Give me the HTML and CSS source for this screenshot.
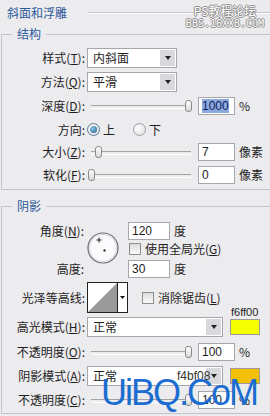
FILE: index.html
```html
<!DOCTYPE html>
<html>
<head>
    <meta charset="utf-8">
    <title>斜面和浮雕</title>
    <link rel="stylesheet" href="styles.css">
</head>
<body>
<div class="panel">
    <div class="head">
        <span class="head-title">斜面和浮雕</span>
        <span class="head-line"></span>
    </div>

    <!-- 结构 -->
    <fieldset class="group group-top">
        <legend>结构</legend>
        <div class="row">
            <span class="lbl">样式(<u>T</u>):</span>
            <div class="select"><span class="select-text">内斜面</span><span class="select-btn"></span></div>
        </div>
        <div class="row">
            <span class="lbl">方法(<u>Q</u>):</span>
            <div class="select"><span class="select-text">平滑</span><span class="select-btn"></span></div>
        </div>
        <div class="row">
            <span class="lbl">深度(<u>D</u>):</span>
            <div class="slider"><span class="thumb" style="left: 97px"></span></div>
            <div class="field"><span class="sel">1000</span></div>
            <span class="unit">%</span>
        </div>
        <div class="row r23">
            <span class="lbl">方向:</span>
            <span class="radio on"></span><span class="radio-text">上</span>
            <span class="radio gap"></span><span class="radio-text">下</span>
        </div>
        <div class="row r22">
            <span class="lbl">大小(<u>Z</u>):</span>
            <div class="slider"><span class="thumb" style="left: 7px"></span></div>
            <div class="field">7</div>
            <span class="unit">像素</span>
        </div>
        <div class="row r23">
            <span class="lbl">软化(<u>F</u>):</span>
            <div class="slider"><span class="thumb" style="left: 0px"></span></div>
            <div class="field">0</div>
            <span class="unit">像素</span>
        </div>
    </fieldset>

    <!-- 阴影 -->
    <fieldset class="group group-shade">
        <legend>阴影</legend>
        <div class="angle">
            <span class="lbl a1">角度(<u>N</u>):</span>
            <svg class="dial" width="32" height="32" viewBox="0 0 32 32">
                <circle cx="16" cy="16" r="15" fill="#fbfbfd" stroke="#6a6a70" stroke-width="1.2"/>
                <circle cx="16" cy="16" r="13.6" fill="none" stroke="#d6d6dc" stroke-width="1"/>
                <path d="M12 5.5v5M9.5 8h5" stroke="#222" stroke-width="1"/>
                <rect x="16.5" y="17.5" width="2" height="2" fill="#111"/>
            </svg>
            <div class="cell c1"><div class="field mid">120</div><span class="unit">度</span></div>
            <div class="cell c2"><span class="check"></span><span class="check-text">使用全局光(<u>G</u>)</span></div>
            <span class="lbl a3">高度:</span>
            <div class="cell c3"><div class="field mid">30</div><span class="unit">度</span></div>
        </div>
        <div class="row r33">
            <span class="lbl">光泽等高线:</span>
            <svg class="contour" width="41" height="31" viewBox="0 0 41 31">
                <rect x="0.5" y="0.5" width="40" height="30" fill="#fff" stroke="#222"/>
                <polygon points="1,30 30,1 30,30" fill="#9a9a9a"/>
                <line x1="30.5" y1="0" x2="30.5" y2="31" stroke="#222"/>
                <polygon points="33,14 38,14 35.5,17" fill="#111"/>
            </svg>
            <span class="check far"></span><span class="check-text">消除锯齿(<u>L</u>)</span>
        </div>
        <div class="row r26">
            <span class="lbl">高光模式(<u>H</u>):</span>
            <div class="select wide"><span class="select-text">正常</span><span class="select-btn"></span></div>
            <div class="swatch yellow"><span class="swatch-code">f6ff00</span></div>
        </div>
        <div class="row">
            <span class="lbl">不透明度(<u>O</u>):</span>
            <div class="slider"><span class="thumb" style="left: 97px"></span></div>
            <div class="field">100</div>
            <span class="unit">%</span>
        </div>
        <div class="row">
            <span class="lbl">阴影模式(<u>A</u>):</span>
            <div class="select wide"><span class="select-text">正常</span><span class="select-btn"></span></div>
            <div class="swatch orange"></div>
        </div>
        <div class="row">
            <span class="lbl">不透明度(<u>C</u>):</span>
            <div class="slider"><span class="thumb" style="left: 97px"></span></div>
            <div class="field">100</div>
            <span class="unit">%</span>
        </div>
    </fieldset>

    <!-- watermarks and notes on top -->
    <div class="wm-top">
        <div class="wm-cn">PS教程论坛</div>
        <div class="wm-en">BBS.16XX8.COM</div>
    </div>
    <div class="note">f4bf08</div>
    <div class="wm-big">UiBQ.CoM</div>
</div>
</body>
</html>
```

FILE: styles.css
```css
* {
    box-sizing: border-box;
}
body {
    margin: 0;
    background: #ecebee;
    font-family: "Noto Sans CJK SC", sans-serif;
    font-size: 12px;
    color: #1e1e1e;
    overflow: hidden;
}
u {
    text-decoration: underline;
}
.panel {
    position: relative;
    width: 270px;
    height: 416px;
    overflow: hidden;
}

/* title line */
.head {
    display: flex;
    align-items: center;
    height: 26px;
    padding-left: 7px;
}
.head-title {
    color: #2d5a9b;
    line-height: 16px;
}
.head-line {
    flex: 1;
    margin-left: 21px;
    height: 2px;
    border-top: 1px solid #c3c3cb;
    border-bottom: 1px solid #fff;
}

/* group boxes */
.group {
    margin: 0 0 0 1px;
    padding: 4px 0 3px 0;
    border: 1px solid #c3c3cb;
    border-right: none;
    min-width: 0;
}
.group-shade {
    margin-top: 8px;
    padding: 7px 0 1px 0;
}
legend {
    margin-left: 10px;
    padding: 0 5px;
    line-height: 16px;
    color: #2d5a9b;
}

/* rows */
.row {
    display: flex;
    align-items: center;
    height: 24px;
}
.r22 { height: 22px; }
.r23 { height: 23px; }
.r26 { height: 26px; }
.r33 { height: 33px; }
.lbl {
    width: 83px;
    margin-right: 2px;
    text-align: right;
    white-space: nowrap;
    flex: none;
    line-height: 16px;
}

/* dropdowns */
.select {
    display: flex;
    width: 90px;
    height: 20px;
    background: #fff;
    border: 1px solid #a7a6aa;
    flex: none;
}
.select.wide {
    width: 136px;
}
.select-text {
    flex: 1;
    padding-left: 5px;
    line-height: 18px;
}
.select-btn {
    width: 15px;
    margin: 1px;
    background: #d9d8dc;
    display: flex;
    align-items: center;
    justify-content: center;
}
.select-btn::after {
    content: '';
    border-left: 3.5px solid transparent;
    border-right: 3.5px solid transparent;
    border-top: 4px solid #222;
}

/* sliders */
.slider {
    position: relative;
    width: 106px;
    height: 14px;
    margin-left: 1px;
    flex: none;
}
.slider::before {
    content: '';
    position: absolute;
    left: 3px;
    right: 3px;
    top: 6px;
    height: 2px;
    border-top: 1px solid #a3a3a3;
    border-bottom: 1px solid #fff;
}
.thumb {
    position: absolute;
    top: 1px;
    width: 7px;
    height: 12px;
    border: 1px solid #8a8a8a;
    border-radius: 3px;
    background: linear-gradient(#fff, #d8d8d8);
}

/* text boxes */
.field {
    width: 37px;
    height: 18px;
    margin-left: 4px;
    padding-left: 3px;
    background: #fff;
    border: 1px solid #a7a6aa;
    font-family: "Liberation Sans", sans-serif;
    font-size: 12px;
    line-height: 16px;
    flex: none;
}
.field.mid {
    width: 42px;
    margin-left: 0;
}
.sel {
    background: #8aa9dd;
    color: #122060;
}
.unit {
    margin-left: 4px;
    line-height: 16px;
}

/* radio + checkbox */
.radio {
    width: 13px;
    height: 13px;
    border-radius: 50%;
    border: 1px solid #9aa0a8;
    background: radial-gradient(circle at 40% 40%, #fff, #dadadc);
    display: flex;
    align-items: center;
    justify-content: center;
    flex: none;
}
.radio.on {
    border-color: #5d7c9a;
}
.radio.on::after {
    content: '';
    width: 7px;
    height: 7px;
    border-radius: 50%;
    background: radial-gradient(circle at 35% 35%, #8cc8e6, #1f5f8c);
}
.radio.gap {
    margin-left: 18px;
}
.radio-text {
    margin-left: 3px;
    line-height: 16px;
}
.check {
    width: 12px;
    height: 12px;
    margin-left: 1px;
    border: 1px solid #8e8f8f;
    background: linear-gradient(#dcdcdc, #fafafa);
    flex: none;
}
.check.far {
    margin-left: 14px;
}
.check-text {
    margin-left: 4px;
    line-height: 16px;
    white-space: nowrap;
}

/* angle block */
.angle {
    display: grid;
    grid-template-columns: 85px 41px auto;
    grid-template-rows: 20px 16px 24px;
    align-items: center;
}
.angle .lbl {
    width: auto;
    margin-right: 0;
    padding-right: 3px;
}
.a1 { grid-column: 1; grid-row: 1; }
.a3 { grid-column: 1; grid-row: 3; }
.dial {
    grid-column: 2;
    grid-row: 1 / 4;
    align-self: start;
    margin-top: 11px;
}
.cell {
    display: flex;
    align-items: center;
    grid-column: 3;
}
.c1 { grid-row: 1; }
.c2 { grid-row: 2; }
.c3 { grid-row: 3; }

.contour {
    flex: none;
}

/* colour swatches */
.swatch {
    position: relative;
    width: 30px;
    height: 16px;
    margin-left: 7px;
    border: 1px solid #9a9a9a;
    flex: none;
}
.yellow { background: #f6ff00; }
.orange { background: #f4bf08; }
.swatch-code {
    position: absolute;
    left: 0;
    bottom: calc(100% + 2px);
    font-family: "Liberation Sans", sans-serif;
    font-size: 11px;
    line-height: 12px;
    color: #222;
}

/* overlays */
.wm-top {
    position: absolute;
    top: 4px;
    left: 185px;
    width: 80px;
    text-align: center;
    color: #fff;
    text-shadow: 1px 0 #8c8c8c, -1px 0 #8c8c8c, 0 1px #8c8c8c, 0 -1px #8c8c8c;
}
.wm-cn {
    font-size: 12px;
    line-height: 14px;
}
.wm-en {
    font-family: "DejaVu Sans Mono", monospace;
    font-size: 10px;
    line-height: 12px;
}
.note {
    position: absolute;
    left: 177px;
    top: 369px;
    font-family: "Liberation Sans", sans-serif;
    font-size: 12px;
    color: #333;
}
.wm-big {
    position: absolute;
    left: 101px;
    top: 375px;
    font-family: "Liberation Sans", sans-serif;
    font-size: 36px;
    line-height: 36px;
    letter-spacing: -2px;
    color: #1b6dd1;
}
```
